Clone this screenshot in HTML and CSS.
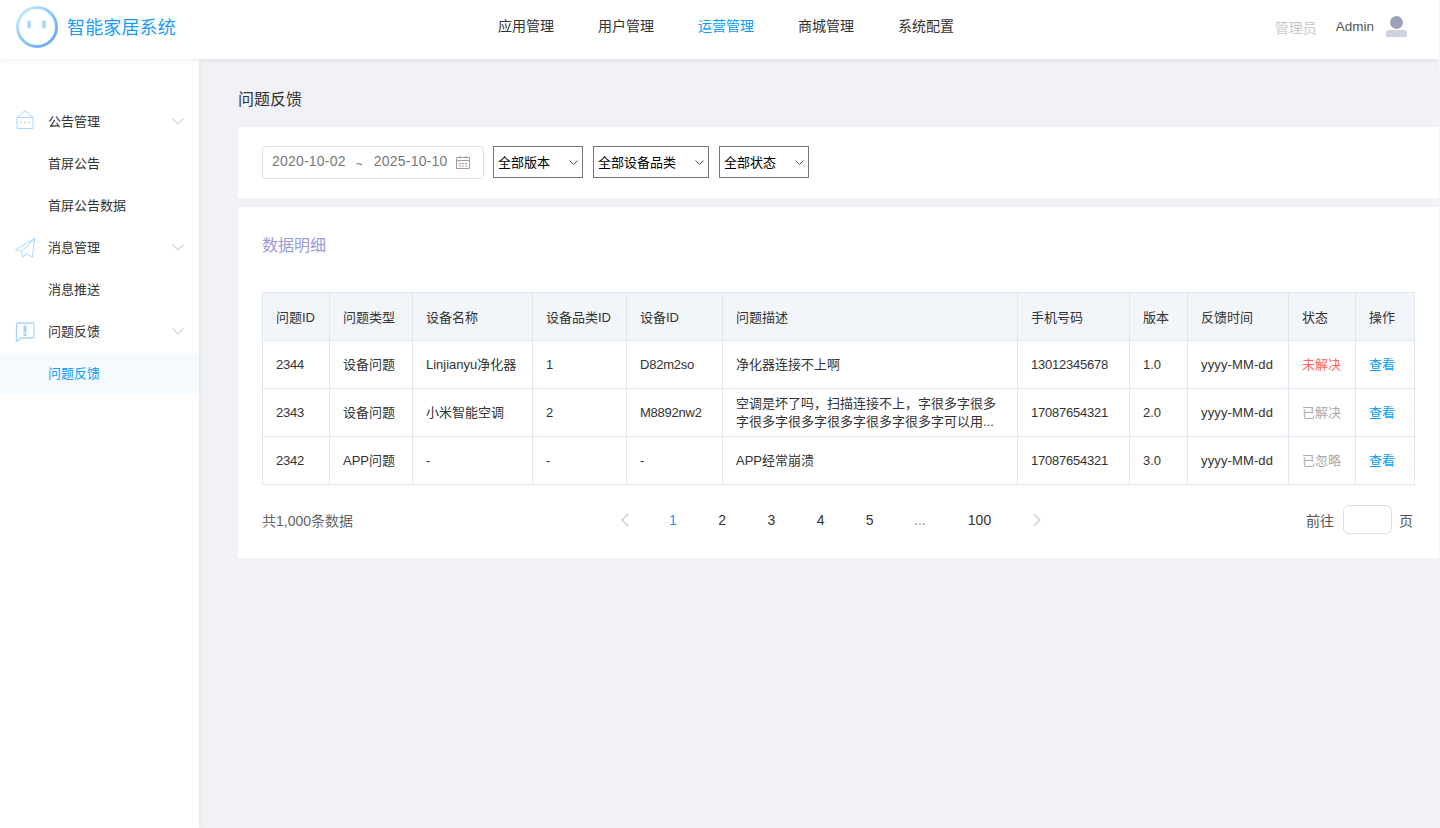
FILE: index.html
```html
<!DOCTYPE html>
<html lang="zh-CN">
<head>
<meta charset="utf-8">
<title>智能家居系统</title>
<link rel="stylesheet" href="styles.css">
</head>
<body>
<header class="topbar">
  <div class="brand">
    <svg class="logo" width="44" height="44" viewBox="0 0 44 44" fill="none">
      <defs><linearGradient id="lg" x1="0" y1="0" x2="1" y2="1"><stop offset="0" stop-color="#d8efff"/><stop offset="0.5" stop-color="#84c8ff"/><stop offset="1" stop-color="#6b9dfb"/></linearGradient></defs>
      <circle cx="22" cy="22" r="19.5" stroke="url(#lg)" stroke-width="3"/>
      <rect x="12.300" y="15.500" width="3.600" height="8" rx="1.500" fill="#a9d8ff"/>
      <rect x="27" y="15.500" width="3.800" height="8" rx="1.500" fill="#a9d8ff"/>
    </svg>
    <span class="brand-name">智能家居系统</span>
  </div>
  <nav class="topnav">
    <a class="topnav-item">应用管理</a>
    <a class="topnav-item">用户管理</a>
    <a class="topnav-item is-active">运营管理</a>
    <a class="topnav-item">商城管理</a>
    <a class="topnav-item">系统配置</a>
  </nav>
  <div class="userbox">
    <span class="role">管理员</span>
    <span class="uname">Admin</span>
    <svg class="avatar" width="22" height="22" viewBox="0 0 22 22">
      <circle cx="10.500" cy="6.500" r="6.500" fill="#9aa1b9"/>
      <path d="M0 21v-4q0-3 3-3h15q3 0 3 3v4z" fill="#cdd1e0"/>
    </svg>
  </div>
</header>
<div class="shell">
  <aside class="sidebar">
    <div class="menu-item">
      <svg class="menu-icon" width="18" height="20" viewBox="0 0 18 20" fill="none" stroke="#a9d6ff">
        <path d="M1 7.500h16v11H1zM1 7.500L9 .5l8 7"/>
        <path d="M4.500 12.500h1.500M8.300 12.500h1.500M12 12.500h1.500" stroke-width="1.500"/>
      </svg>
      <span>公告管理</span>
      <svg class="chev" width="12" height="7" viewBox="0 0 12 7" fill="none" stroke="#d4d4d4" stroke-width="1.200"><path d="M.5.5L6 6 11.500.5"/></svg>
    </div>
    <div class="menu-sub">首屏公告</div>
    <div class="menu-sub">首屏公告数据</div>
    <div class="menu-item">
      <svg class="menu-icon menu-icon-low" width="20" height="20" viewBox="0 0 20 20" fill="none" stroke="#a9d6ff">
        <path d="M19.500 .5L.5 11.500l6 2zM19.500 .5L6.500 13.500 8 19.500 11 15.500l6.500 3.500z"/>
      </svg>
      <span>消息管理</span>
      <svg class="chev" width="12" height="7" viewBox="0 0 12 7" fill="none" stroke="#d4d4d4" stroke-width="1.200"><path d="M.5.5L6 6 11.500.5"/></svg>
    </div>
    <div class="menu-sub">消息推送</div>
    <div class="menu-item">
      <svg class="menu-icon menu-icon-low" width="20" height="20" viewBox="0 0 20 20" fill="none">
        <path d="M2.500 1h15A1.500 1.500 0 0 1 19 2.500v12a1.500 1.500 0 0 1-1.500 1.500H6l-4.500 3.500V2.500A1.500 1.500 0 0 1 2.500 1z" stroke="#a9d6ff" stroke-width="1.300"/>
        <path d="M10 3.500v7M10 11.500v2.500" stroke="#9ed0ff" stroke-width="3"/>
      </svg>
      <span>问题反馈</span>
      <svg class="chev" width="12" height="7" viewBox="0 0 12 7" fill="none" stroke="#d4d4d4" stroke-width="1.200"><path d="M.5.5L6 6 11.500.5"/></svg>
    </div>
    <div class="menu-sub is-active">问题反馈</div>
  </aside>
  <main class="content">
    <h1 class="page-title">问题反馈</h1>
    <section class="card filters">
      <div class="daterange">
        <span class="date">2020-10-02</span><span class="date tilde">~</span><span class="date">2025-10-10</span>
        <svg class="cal" width="14" height="13" viewBox="0 0 14 13" fill="none" stroke="#a0a0a0">
          <path d="M.5 1.500h13v11H.5zM.5 4.500h13M4 0v2.500M10 0v2.500"/>
          <path d="M3 7.500h2M6 7.500h2M9 7.500h2M3 10h2M6 10h2M9 10h2"/>
        </svg>
      </div>
      <div class="sel-wrap">
        <select class="sel sel-a"><option>全部版本</option></select>
        <svg class="sel-chev" width="9" height="5" viewBox="0 0 9 5" fill="none" stroke="#555"><path d="M.5.5l4 4 4-4"/></svg>
      </div>
      <div class="sel-wrap">
        <select class="sel sel-b"><option>全部设备品类</option></select>
        <svg class="sel-chev" width="9" height="5" viewBox="0 0 9 5" fill="none" stroke="#555"><path d="M.5.5l4 4 4-4"/></svg>
      </div>
      <div class="sel-wrap">
        <select class="sel sel-a"><option>全部状态</option></select>
        <svg class="sel-chev" width="9" height="5" viewBox="0 0 9 5" fill="none" stroke="#555"><path d="M.5.5l4 4 4-4"/></svg>
      </div>
    </section>
    <section class="card details">
      <h2 class="details-title">数据明细</h2>
      <table class="grid">
        <colgroup>
          <col class="c1"><col class="c2"><col class="c3"><col class="c4"><col class="c5"><col class="c6"><col class="c7"><col class="c8"><col class="c9"><col class="c10"><col class="c11">
        </colgroup>
        <thead>
          <tr><th>问题ID</th><th>问题类型</th><th>设备名称</th><th>设备品类ID</th><th>设备ID</th><th>问题描述</th><th>手机号码</th><th>版本</th><th>反馈时间</th><th>状态</th><th>操作</th></tr>
        </thead>
        <tbody>
          <tr><td class="num">2344</td><td>设备问题</td><td>Linjianyu净化器</td><td>1</td><td class="num">D82m2so</td><td>净化器连接不上啊</td><td class="num">13012345678</td><td>1.0</td><td class="dt">yyyy-MM-dd</td><td class="st-open">未解决</td><td><a class="link">查看</a></td></tr>
          <tr><td class="num">2343</td><td>设备问题</td><td>小米智能空调</td><td>2</td><td class="num">M8892nw2</td><td><div class="clamp">空调是坏了吗，扫描连接不上，字很多字很多字很多字很多字很多字很多字很多字可以用...</div></td><td class="num">17087654321</td><td>2.0</td><td class="dt">yyyy-MM-dd</td><td class="st-done">已解决</td><td><a class="link">查看</a></td></tr>
          <tr><td class="num">2342</td><td>APP问题</td><td>-</td><td>-</td><td>-</td><td>APP经常崩溃</td><td class="num">17087654321</td><td>3.0</td><td class="dt">yyyy-MM-dd</td><td class="st-done">已忽略</td><td><a class="link">查看</a></td></tr>
        </tbody>
      </table>
      <div class="tablefoot">
        <span class="total">共1,000条数据</span>
        <div class="pager">
          <svg class="pg-arrow pg-prev" width="10" height="14" viewBox="0 0 10 14" fill="none" stroke="#d0d0d0" stroke-width="1.500"><path d="M8.500 1L2 7l6.500 6"/></svg>
          <a class="pg is-active">1</a><a class="pg">2</a><a class="pg">3</a><a class="pg">4</a><a class="pg">5</a><a class="pg pg-more">...</a><a class="pg pg-wide">100</a>
          <svg class="pg-arrow pg-next" width="10" height="14" viewBox="0 0 10 14" fill="none" stroke="#d0d0d0" stroke-width="1.500"><path d="M1.500 1L8 7l-6.500 6"/></svg>
        </div>
        <div class="jump"><span>前往</span><input class="jump-input" type="text"><span class="jump-unit">页</span></div>
      </div>
    </section>
  </main>
</div>
</body>
</html>
```
FILE: styles.css
```css
* { box-sizing: border-box; }
html { height: 100%; overflow: hidden; background: #f6f6f8; }
body {
  margin: 0;
  width: 1439px;
  height: 100%;
  overflow: hidden;
  background: #f0f2f6;
  color: #333;
  font-family: "Liberation Sans", "Noto Sans CJK SC", sans-serif;
  font-size: 13px;
}
.topbar {
  position: relative;
  z-index: 2;
  height: 59px;
  background: #fff;
  display: flex;
  align-items: center;
  box-shadow: 0 1px 6px rgba(0, 0, 0, 0.08);
}
.brand { width: 477px; display: flex; align-items: center; padding-left: 15px; }
.logo { margin-top: -6px; }
.brand-name { margin-left: 8px; margin-top: -8px; font-size: 18px; letter-spacing: 0.15px; color: #1a9bfc; }
.topnav { flex: 1; display: flex; gap: 44px; padding-left: 21px; margin-top: -9px; }
.topnav-item { font-size: 14px; color: #333; }
.topnav-item.is-active { color: #0a9bff; }
.userbox { display: flex; align-items: center; padding-right: 31px; margin-top: -6px; }
.role { font-size: 14px; color: #c9c9c9; margin-right: 19px; }
.uname { font-size: 13.500px; color: #555; margin-right: 12px; }
.avatar { margin-top: 0; }
.shell { display: flex; height: calc(100% - 59px); }
.sidebar {
  width: 199px;
  flex: none;
  background: #fff;
  padding-top: 42px;
  box-shadow: 1px 0 4px rgba(0, 0, 0, 0.06);
}
.menu-item { height: 42px; display: flex; align-items: center; padding: 0 15px 4px; color: #333; }
.menu-icon { width: 20px; flex: none; }
.menu-icon-low { margin-top: 3px; }
.menu-item span { margin-left: 13px; flex: 1; }
.chev { margin-top: 2px; }
.menu-sub { height: 42px; line-height: 42px; padding-left: 48px; color: #333; }
.menu-sub.is-active { background: #f5faff; color: #0a9bff; }
.content { flex: 1; min-width: 0; padding: 30px 0 0 39px; }
.page-title { margin: 0 0 17px; font-size: 16px; font-weight: 400; line-height: 21px; color: #333; }
.card { background: #fff; }
.filters { height: 71px; display: flex; align-items: flex-start; padding: 19px 0 0 24px; margin-bottom: 9px; }
.daterange {
  width: 222px;
  height: 33px;
  border: 1px solid #dcdfe6;
  border-radius: 4px;
  display: flex;
  align-items: center;
  padding: 0 13px 0 9px;
  color: #777;
  font-size: 14px;
  margin-right: 9px;
}
.date { letter-spacing: 0.2px; margin-bottom: 4px; }
.tilde { margin: 2px 11px 0 10px; font-size: 12px; }
.cal { margin-left: auto; }
.sel-wrap { position: relative; margin-right: 10px; display: flex; }
.sel {
  appearance: none;
  height: 32px;
  padding: 0 0 0 4px;
  font-family: inherit;
  font-size: 13px;
  color: #000;
  background: #fff;
  border: 1px solid #767676;
  border-radius: 0;
}
.sel-a { width: 90px; }
.sel-b { width: 116px; }
.sel-chev { position: absolute; right: 5px; top: 14px; }
.details { height: 351px; padding: 0 25px 0 24px; }
.details-title { margin: 0; padding-top: 28px; font-size: 16px; line-height: 22px; font-weight: 400; color: #9a9bd8; }
.grid {
  margin-top: 35px;
  width: 1152px;
  table-layout: fixed;
  border-collapse: collapse;
}
.c1 { width: 67px; } .c2 { width: 83px; } .c3 { width: 120px; } .c4 { width: 94px; }
.c5 { width: 96px; } .c6 { width: 295px; } .c7 { width: 112px; } .c8 { width: 58px; }
.c9 { width: 101px; } .c10 { width: 67px; } .c11 { width: 59px; }
.grid th, .grid td {
  height: 48px;
  border: 1px solid #dfe7f1;
  padding: 0 13px;
  text-align: left;
  font-weight: 400;
  font-size: 13px;
  line-height: 18px;
  color: #333;
}
.grid th { background: #f2f5f9; padding-top: 2px; }
.grid td.num { letter-spacing: -0.23px; }
.grid td.dt { letter-spacing: 0.13px; }
.clamp {
  display: -webkit-box;
  -webkit-box-orient: vertical;
  -webkit-line-clamp: 2;
  overflow: hidden;
}
.grid .st-open { color: #ff6666; }
.grid .st-done { color: #aaa; }
.link { color: #0a9bff; }
.tablefoot { position: relative; display: flex; align-items: center; height: 72px; padding-bottom: 3px; }
.total { font-size: 14px; color: #666; margin-top: 1px; }
.pager { position: absolute; left: 358px; top: 20px; display: flex; align-items: center; height: 30px; }
.pg { width: 49.200px; text-align: center; font-size: 14px; color: #333; }
.pg.is-active { color: #0a9bff; }
.pg-more { color: #888; padding-left: 2px; }
.pg-wide { width: 71px; padding-left: 1px; }
.pg-prev { margin-right: 18.400px; }
.pg-next { margin-left: 17.400px; }
.jump { display: flex; align-items: center; margin-left: auto; padding-right: 1px; font-size: 14px; color: #555; }
.jump-input { width: 49px; height: 29px; margin-left: 9px; border: 1px solid #dcdfe6; border-radius: 6px; background: #fff; padding: 0; }
.jump-unit { margin-left: 7px; }
```
